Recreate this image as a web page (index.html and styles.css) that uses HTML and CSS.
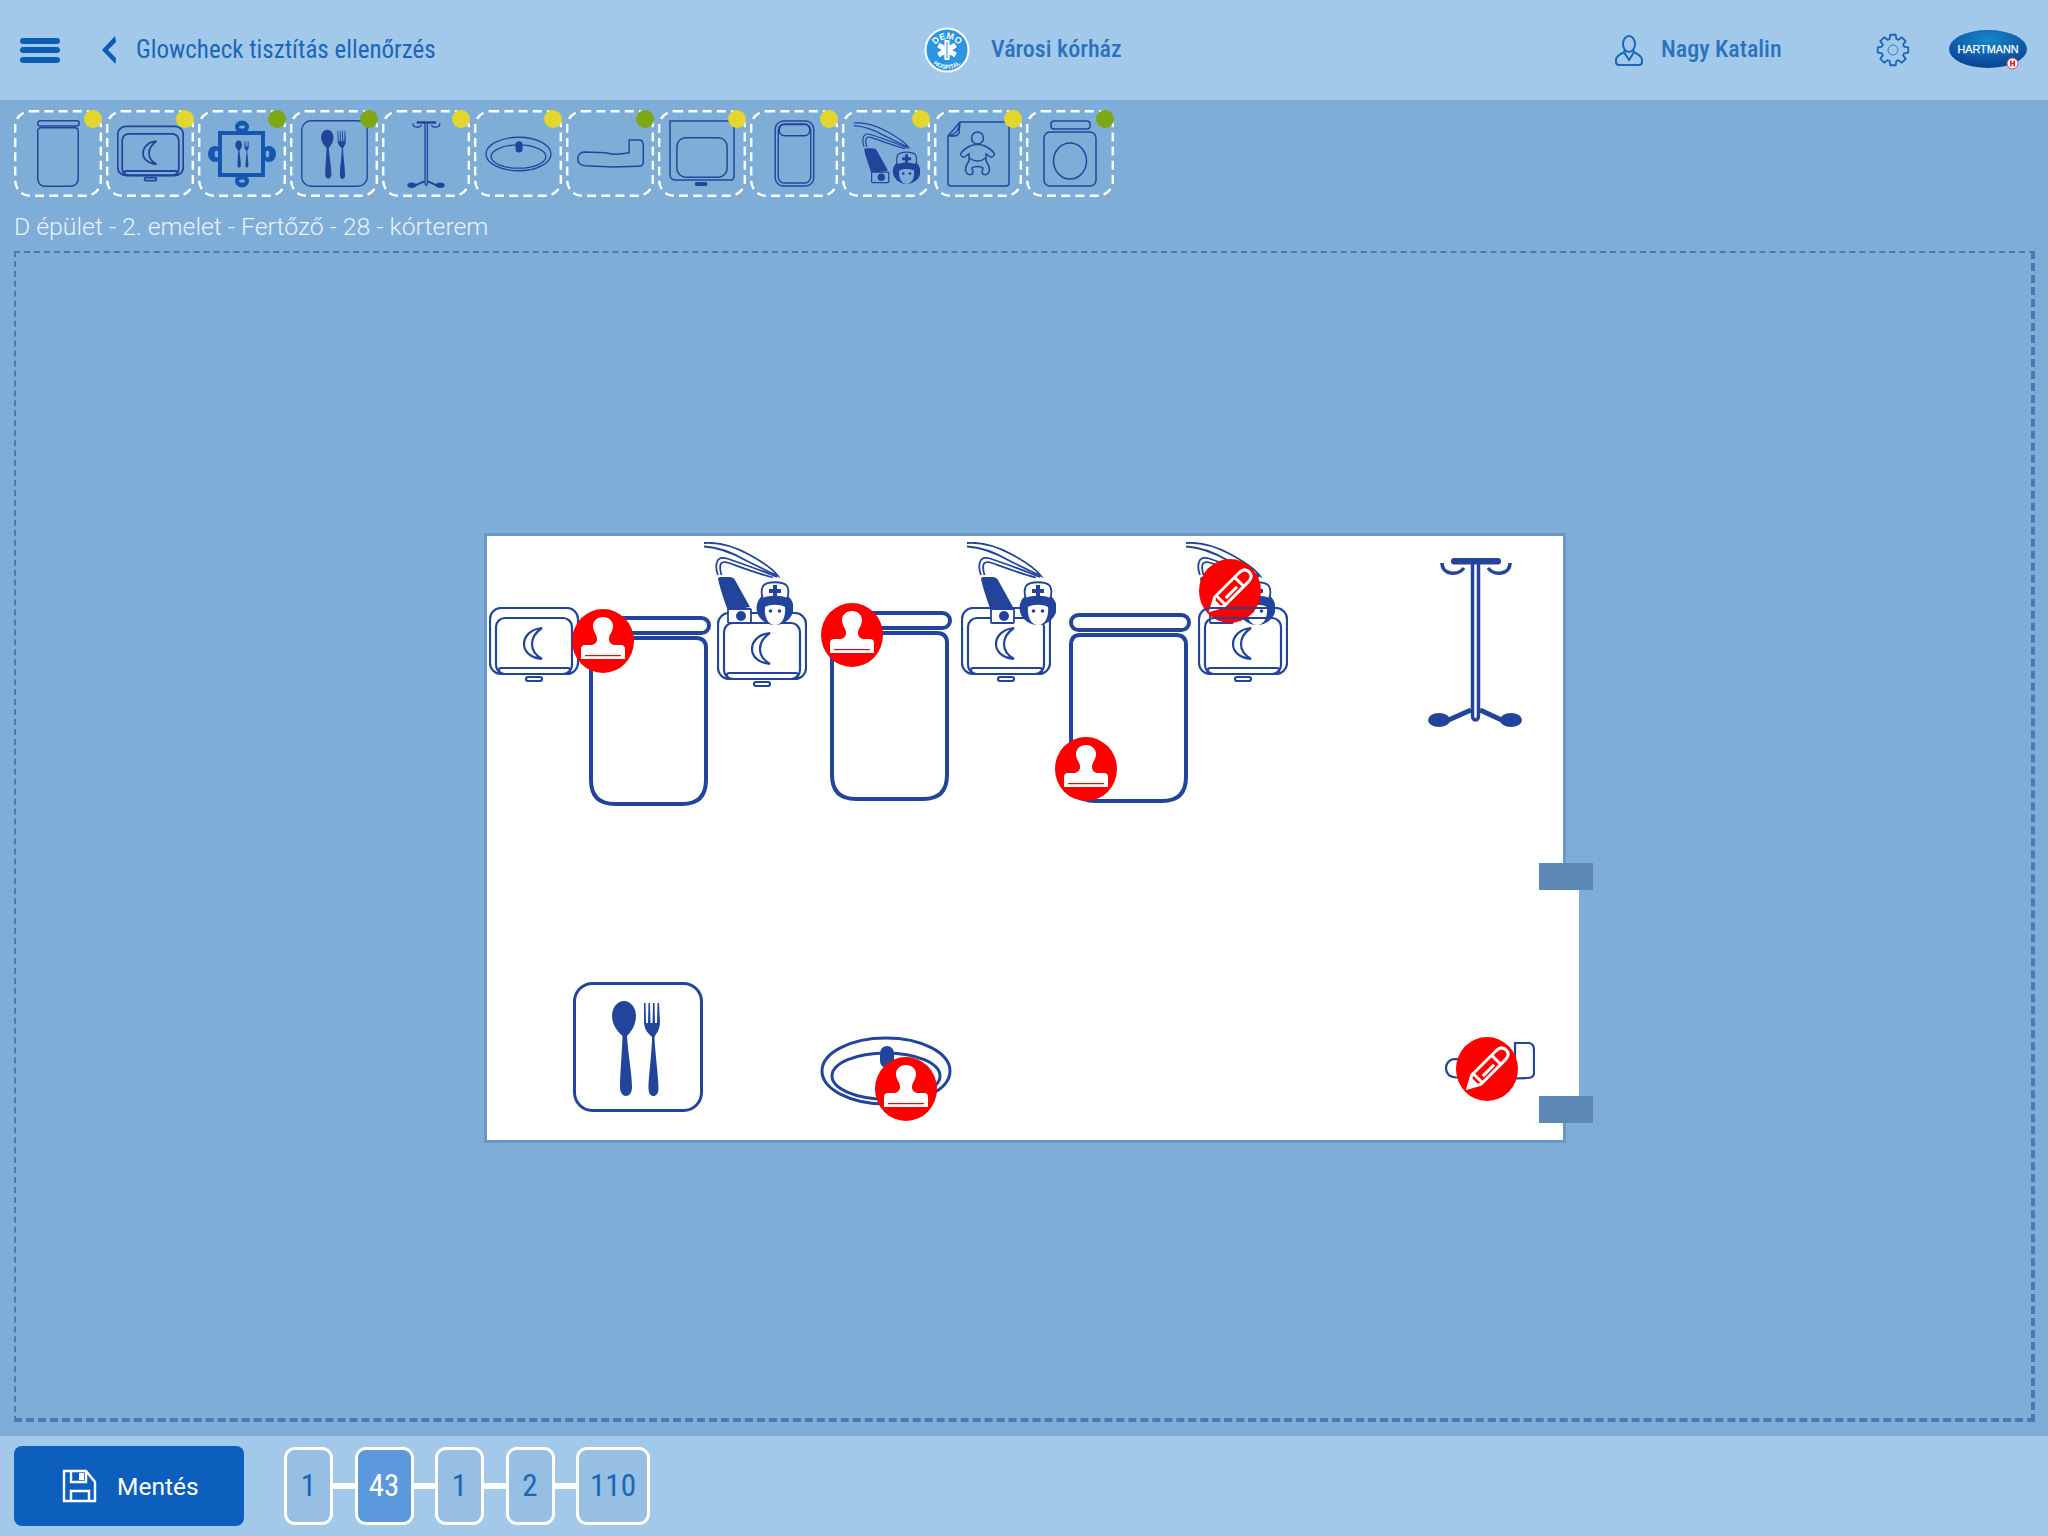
FILE: index.html
```html
<!DOCTYPE html>
<html lang="hu">
<head>
    <meta charset="UTF-8">
    <title>Glowcheck</title>
    <link rel="stylesheet" href="styles.css">
</head>
<body>
    <!-- shared drawings for the toolbar and the room plan -->
    <svg class="sprite">
        <symbol id="tile-frame" viewBox="0 0 88 87">
            <rect x="1.2" y="1.2" width="85.6" height="84.6" rx="15" stroke-dasharray="9 5.2"/>
        </symbol>
        <symbol id="bed" viewBox="0 0 122 190">
            <rect x="2" y="2" width="118" height="15" rx="7.5"/>
            <path d="M11 22 H107 Q117 22 117 32 V164 Q117 188 93 188 H26 Q2 188 2 164 V32 Q2 22 11 22 Z"/>
        </symbol>
        <symbol id="nightstand" viewBox="0 0 90 75">
            <rect x="1" y="1" width="88" height="66" rx="11"/>
            <rect x="7" y="11" width="76" height="56" rx="9"/>
            <rect x="10" y="61" width="71" height="6" rx="2"/>
            <rect x="37" y="70" width="16" height="4" rx="2"/>
            <path d="M53 21 C42 22 35 29 35 37 C35 45 42 51 53 52 C46 48 43 43 43 37 C43 30 47 25 53 21 Z"/>
        </symbol>
        <symbol id="utensils" viewBox="37 17 52 99">
            <path class="solid" d="M51 19 C44 19 39 26 39 34 C39 43 45 50 49.5 54 C49 72 47 92 47 105 C47 111 50 114 53 114 C56 114 59 111 59 105 C59 92 55 72 54 54 C58 50 63 43 63 34 C63 26 58 19 51 19 Z"/>
            <path class="solid" d="M71 21 h1.5 l.5 20 h2 l.5 -20 h1.5 l.5 20 h2 l.5 -20 h1.5 l.5 20 h2 l.5 -20 h1.5 L87 40 C87 48 83 52 81.5 55 C82 70 85.5 95 85.5 106 C85.5 112 83 114 80.5 114 C78 114 75.5 112 75.5 106 C75.5 95 79 70 79 55 C76 52 71 48 71 40 Z"/>
        </symbol>
        <symbol id="cutlery" viewBox="0 0 130 130">
            <rect x="1.5" y="1.5" width="127" height="127" rx="18"/>
            <use href="#utensils" x="37" y="17" width="52" height="99"/>
        </symbol>
        <symbol id="table" viewBox="0 0 68 68">
            <ellipse class="seat" cx="34" cy="7" rx="7" ry="6.5"/>
            <ellipse class="seat" cx="34" cy="61" rx="7" ry="6.5"/>
            <ellipse class="seat" cx="7" cy="34" rx="7" ry="8"/>
            <ellipse class="seat" cx="61" cy="34" rx="7" ry="8"/>
            <ellipse class="seat-gap" cx="34" cy="7" rx="3" ry="1.6"/>
            <ellipse class="seat-gap" cx="34" cy="61" rx="3" ry="1.6"/>
            <ellipse class="seat-gap" cx="8.5" cy="34" rx="1.8" ry="3.5"/>
            <ellipse class="seat-gap" cx="59.5" cy="34" rx="1.8" ry="3.5"/>
            <rect class="table-top" x="12" y="13" width="43" height="42"/>
            <use href="#utensils" x="24" y="20" width="20" height="28"/>
        </symbol>
        <symbol id="stand" viewBox="-3 0 96 172">
            <rect class="solid" x="21" y="3" width="50" height="6.5" rx="3"/>
            <path d="M12 8 C12 20 28 21 34 13 M58 13 C64 21 80 20 80 8"/>
            <path d="M42.5 9 V160 Q42.5 165 45.5 165 Q48.5 165 48.5 160 V9"/>
            <path class="stand-leg" d="M41 155 L14 167 M50 155 L76 167"/>
            <ellipse class="solid" cx="9" cy="165" rx="11" ry="7"/>
            <ellipse class="solid" cx="81" cy="165" rx="11" ry="7"/>
        </symbol>
        <symbol id="basin" viewBox="0 0 132 70">
            <ellipse cx="66" cy="35" rx="64" ry="33"/>
            <ellipse cx="66" cy="40" rx="54" ry="23"/>
            <rect class="solid" x="60" y="10" width="14" height="22" rx="7"/>
        </symbol>
        <symbol id="rail" viewBox="0 0 90 38">
            <path d="M10 17 C4 17 1 22 1 26 C1 32 5 35 11 35.5 L48 37 L82 36 C87 36 89 34 89 31 L89 8 C89 4 87 1 83 1 L70 1 L70 18 C60 20 48 21 38 18 Z"/>
        </symbol>
        <symbol id="tray" viewBox="0 0 68 68">
            <path d="M1 1 H66 V57 Q66 61 62 61 H7 Q1 61 1 55 Z"/>
            <rect x="8" y="18" width="51" height="40" rx="9"/>
            <rect class="solid" x="26" y="63" width="13" height="4" rx="2"/>
        </symbol>
        <symbol id="frame" viewBox="0 0 40 66">
            <rect x="1" y="1" width="38" height="64" rx="8"/>
            <rect x="4" y="4" width="32" height="58" rx="6"/>
            <rect x="5" y="4.5" width="30" height="11" rx="5"/>
        </symbol>
        <symbol id="nurse" viewBox="0 0 90 84">
            <path d="M1 1 C14 0 30 4 45 12 C58 19 70 27 75 34 C62 28 50 22 44 19 C30 11 14 5 1 4.5"/>
            <path d="M15 33 C13 28 13 23 14 20 C15 16 19 15 24 16.5 C40 22 62 30 74 35"/>
            <path d="M18.5 33 C17 28 16.5 24 18 21.5 C20 19 23 20 26 21 C40 26 56 32 70 35.5"/>
            <path class="solid" d="M15 37 C15 35 17 35 19 35 L26 35 C29 35 31 36 32 38 L47 65 L25 69 C21 58 17 46 15 37 Z"/>
            <rect class="paper" x="25" y="67" width="23" height="14" rx="1"/>
            <circle class="solid" cx="38" cy="74" r="5"/>
            <ellipse class="solid" cx="72" cy="66" rx="18.5" ry="17"/>
            <path class="paper" d="M60 44 C64 39 80 39 84 44 C86 48 85.5 53 84 57 C78 54 66 54 60 57 C58.5 53 58 48 60 44 Z"/>
            <path class="paper-flat" d="M62 65 C67 62 77 62 82 65 C83 75 79 83 72 83 C65 83 61 75 62 65 Z"/>
            <path class="solid" d="M70 43 H74 V47 H78 V51 H74 V55 H70 V51 H66 V47 H70 Z"/>
            <circle class="solid" cx="67.5" cy="69" r="1.8"/>
            <circle class="solid" cx="76.5" cy="69" r="1.8"/>
        </symbol>
        <symbol id="baby" viewBox="0 0 64 68">
            <path d="M14 2 L60 2 Q63 2 63 5 L63 63 Q63 66 60 66 L5 66 Q2 66 2 63 L2 16 Z"/>
            <path d="M14 2 C13 9 11 14 2 16 C7 16 12 17 13 13 Z"/>
            <circle cx="31.5" cy="18" r="6"/>
            <path d="M24 26 C20 28 16 31 14.5 34 C15 37 18 38 20 36 L23 34 L23 41 C20 45 19 49 20 52 C22 56 27 55 27 52 L26 48 C28 46 35 46 37 48 L36 52 C36 55 41 56 43 52 C44 49 43 45 40 41 L40 34 L43 36 C45 38 48 37 48.5 34 C47 31 43 28 39 26 Q31.5 23 24 26 Z"/>
            <path d="M23 38 Q31.5 44 40 38"/>
        </symbol>
        <symbol id="seat" viewBox="0 0 54 67">
            <rect x="8" y="1" width="39" height="8" rx="3"/>
            <rect x="1" y="12" width="52" height="54" rx="6"/>
            <ellipse cx="27" cy="41" rx="16.5" ry="18"/>
        </symbol>
        <symbol id="stamp-badge" viewBox="-31 -32 62 64">
            <ellipse class="badge-red" cx="0" cy="0" rx="31" ry="32"/>
            <path class="badge-white" d="M0 -24 C6 -24 10 -20 10 -15 C10 -9 6 -7 6 -2 C6 2 9 4 13 4 L18 4 C21 4 22 6 22 8 L22 18 L-22 18 L-22 8 C-22 6 -21 4 -18 4 L-13 4 C-9 4 -6 2 -6 -2 C-6 -7 -10 -9 -10 -15 C-10 -20 -6 -24 0 -24 Z"/>
            <rect class="badge-red" x="-18" y="14" width="36" height="1.2"/>
        </symbol>
        <symbol id="pen-badge" viewBox="-31 -32 62 64">
            <ellipse class="badge-red" cx="0" cy="0" rx="31" ry="32"/>
            <g transform="rotate(-45)">
                <path class="pen-line" d="M-27 0 L-15 -6.5 H19 Q27 -6.5 27 0 Q27 6.5 19 6.5 H-15 Z"/>
                <path class="badge-white" d="M-28 0 L-17 -6 V6 Z"/>
                <path class="pen-line" d="M-13 -6 V6 M13 -6 V6 M-8 2 H8"/>
            </g>
        </symbol>
    </svg>

    <header class="top-bar">
        <div class="hamburger"><span></span><span></span><span></span></div>
        <svg class="chevron" viewBox="0 0 14 28"><path d="M13 0 L14 6 L6 14 L14 22 L13.5 28 L0 14 Z"/></svg>
        <span class="page-title">Glowcheck tisztítás ellenőrzés</span>

        <svg class="hospital-logo" viewBox="-23 -23 46 46">
            <defs>
                <path id="arc-top" d="M-14 3 A14 14 0 0 1 14 3"/>
                <path id="arc-bottom" d="M-20 -1 A20 20 0 0 0 20 -1"/>
            </defs>
            <circle class="logo-ring" r="21.5"/>
            <g class="logo-star">
                <rect x="-2.6" y="-10" width="5.2" height="20" rx="1"/>
                <rect x="-2.6" y="-10" width="5.2" height="20" rx="1" transform="rotate(60)"/>
                <rect x="-2.6" y="-10" width="5.2" height="20" rx="1" transform="rotate(120)"/>
            </g>
            <path class="logo-staff" d="M0 -8 V8"/>
            <text class="logo-text"><textPath href="#arc-top" startOffset="50%">DEMO</textPath></text>
            <text class="logo-small"><textPath href="#arc-bottom" startOffset="50%">HOSPITAL</textPath></text>
        </svg>
        <span class="hospital-name">Városi kórház</span>

        <svg class="user-icon" viewBox="0 0 28 31">
            <ellipse cx="14" cy="9" rx="6" ry="8"/>
            <path d="M9.5 15 V17 C5 19 1 21 1 25 V27 Q1 30 4 30 H24 Q27 30 27 27 V25 C27 21 23 19 18.5 17 V15 M9.5 18 L14 25 L18.5 18"/>
        </svg>
        <span class="user-name">Nagy Katalin</span>

        <svg class="gear-icon" viewBox="-17 -17 34 34">
            <polygon points="-3.36,-11 -2.7,-15.26 2.7,-15.26 3.36,-11 5.4,-10.15 8.88,-12.7 12.7,-8.88 10.15,-5.4 11,-3.36 15.26,-2.7 15.26,2.7 11,3.36 10.15,5.4 12.7,8.88 8.88,12.7 5.4,10.15 3.36,11 2.7,15.26 -2.7,15.26 -3.36,11 -5.4,10.15 -8.88,12.7 -12.7,8.88 -10.15,5.4 -11,3.36 -15.26,2.7 -15.26,-2.7 -11,-3.36 -10.15,-5.4 -12.7,-8.88 -8.88,-12.7 -5.4,-10.15"/>
            <circle class="gear-hub" r="5"/>
        </svg>

        <svg class="brand-logo" viewBox="0 0 78 40">
            <defs>
                <radialGradient id="brand-fill" cx="50%" cy="25%" r="70%">
                    <stop offset="0" stop-color="#1488cc"/>
                    <stop offset="1" stop-color="#0a4596"/>
                </radialGradient>
            </defs>
            <ellipse cx="39" cy="19" rx="39" ry="19" fill="url(#brand-fill)"/>
            <text class="brand-text" x="39" y="23" textLength="61" lengthAdjust="spacingAndGlyphs">HARTMANN</text>
            <circle class="brand-seal" cx="63.5" cy="33.5" r="5.5"/>
            <path class="brand-cross" d="M61 30.5 H62.6 V32.7 H64.4 V30.5 H66 V36.5 H64.4 V34.3 H62.6 V36.5 H61 Z"/>
        </svg>
    </header>

    <main class="work-area">
        <div class="tool-row">
            <div class="tile"><svg class="tile-frame"><use href="#tile-frame"/></svg><svg class="icon icon-bed"><use href="#bed"/></svg><i class="dot dot-yellow"></i></div>
            <div class="tile"><svg class="tile-frame"><use href="#tile-frame"/></svg><svg class="icon icon-nightstand"><use href="#nightstand"/></svg><i class="dot dot-yellow"></i></div>
            <div class="tile"><svg class="tile-frame"><use href="#tile-frame"/></svg><svg class="icon icon-table"><use href="#table"/></svg><i class="dot dot-green"></i></div>
            <div class="tile"><svg class="tile-frame"><use href="#tile-frame"/></svg><svg class="icon icon-cutlery"><use href="#cutlery"/></svg><i class="dot dot-green"></i></div>
            <div class="tile"><svg class="tile-frame"><use href="#tile-frame"/></svg><svg class="icon icon-stand"><use href="#stand"/></svg><i class="dot dot-yellow"></i></div>
            <div class="tile"><svg class="tile-frame"><use href="#tile-frame"/></svg><svg class="icon icon-basin"><use href="#basin"/></svg><i class="dot dot-yellow"></i></div>
            <div class="tile"><svg class="tile-frame"><use href="#tile-frame"/></svg><svg class="icon icon-rail"><use href="#rail"/></svg><i class="dot dot-green"></i></div>
            <div class="tile"><svg class="tile-frame"><use href="#tile-frame"/></svg><svg class="icon icon-tray"><use href="#tray"/></svg><i class="dot dot-yellow"></i></div>
            <div class="tile"><svg class="tile-frame"><use href="#tile-frame"/></svg><svg class="icon icon-frame"><use href="#frame"/></svg><i class="dot dot-yellow"></i></div>
            <div class="tile"><svg class="tile-frame"><use href="#tile-frame"/></svg><svg class="icon icon-nurse"><use href="#nurse"/></svg><i class="dot dot-yellow"></i></div>
            <div class="tile"><svg class="tile-frame"><use href="#tile-frame"/></svg><svg class="icon icon-baby"><use href="#baby"/></svg><i class="dot dot-yellow"></i></div>
            <div class="tile"><svg class="tile-frame"><use href="#tile-frame"/></svg><svg class="icon icon-seat"><use href="#seat"/></svg><i class="dot dot-green"></i></div>
        </div>

        <div class="location">D épület - 2. emelet - Fertőző - 28 - kórterem</div>

        <div class="canvas">
            <div class="room">
                <!-- viewBox is in page pixels so the plan reads like the measured layout -->
                <svg class="room-plan" viewBox="487 536 1076 604">
                    <rect class="door-gap" x="1560" y="890" width="19" height="206"/>
                    <rect class="door-post" x="1539" y="863" width="54" height="27"/>
                    <rect class="door-post" x="1539" y="1096" width="54" height="27"/>

                    <use class="line-bed" href="#bed" x="589" y="616" width="122" height="190"/>
                    <use class="line-bed" href="#bed" x="830" y="611" width="122" height="190"/>
                    <use class="line-bed" href="#bed" x="1069" y="613" width="122" height="190"/>

                    <use class="line-thin" href="#nightstand" x="489" y="607" width="90" height="75"/>
                    <use class="line-thin" href="#nightstand" x="717" y="612" width="90" height="75"/>
                    <use class="line-thin" href="#nightstand" x="961" y="607" width="90" height="75"/>

                    <use class="line-nurse" href="#nurse" x="703" y="542" width="90" height="84"/>
                    <use class="line-nurse" href="#nurse" x="966" y="542" width="90" height="84"/>
                    <use class="line-nurse" href="#nurse" x="1185" y="542" width="90" height="84"/>

                    <use href="#pen-badge" x="1199" y="559" width="62" height="64"/>
                    <use class="line-thin" href="#nightstand" x="1198" y="607" width="90" height="75"/>

                    <use class="line-stand" href="#stand" x="1427" y="555" width="96" height="172"/>
                    <use class="line-tile" href="#cutlery" x="573" y="982" width="130" height="130"/>
                    <use class="line-tile" href="#basin" x="820" y="1036" width="132" height="70"/>
                    <use class="line-thin" href="#rail" x="1445" y="1042" width="90" height="38"/>

                    <use href="#stamp-badge" x="572" y="609" width="62" height="64"/>
                    <use href="#stamp-badge" x="821" y="603" width="62" height="64"/>
                    <use href="#stamp-badge" x="1055" y="737" width="62" height="64"/>
                    <use href="#stamp-badge" x="875" y="1057" width="62" height="64"/>
                    <use href="#pen-badge" x="1456" y="1037" width="62" height="64"/>
                </svg>
            </div>
        </div>
    </main>

    <footer class="bottom-bar">
        <button class="save-btn">
            <svg class="save-icon" viewBox="0 0 35 34">
                <path d="M2 2 H24 L33 13 V32 H2 Z M9 2 V13 H24 V2 M9 32 V22 H27 V32"/>
                <rect class="save-slot" x="17" y="4" width="5" height="7"/>
            </svg>
            Mentés
        </button>
        <div class="steps">
            <span class="step">1</span><i class="link"></i>
            <span class="step step-mid step-on">43</span><i class="link"></i>
            <span class="step">1</span><i class="link"></i>
            <span class="step">2</span><i class="link"></i>
            <span class="step step-wide">110</span>
        </div>
    </footer>
</body>
</html>
```

FILE: styles.css
```css
body {
    margin: 0;
    width: 2048px;
    height: 1536px;
    display: flex;
    flex-direction: column;
    overflow: hidden;
    background-color: #7eadd8;
    font-family: Roboto, "Liberation Sans", sans-serif;
    font-stretch: condensed;
}

.sprite {
    display: none;
}

/* Shapes inside the shared drawings */
.icon,
.room-plan {
    fill: none;
    stroke: #22459b;
    --paper: #7eadd8;
}

.room-plan {
    --paper: #fff;
}

.solid {
    fill: #22459b;
    stroke: none;
}

.paper {
    fill: var(--paper);
}

.paper-flat {
    fill: var(--paper);
    stroke: none;
}

/* Top bar */
.top-bar {
    height: 100px;
    flex: none;
    display: flex;
    align-items: center;
    background-color: #a2c9ea;
}

.hamburger {
    width: 40px;
    margin-left: 20px;
    display: flex;
    flex-direction: column;
    gap: 3.5px;
}

.hamburger span {
    height: 6px;
    border-radius: 3px;
    background-color: #0a5cb5;
}

.chevron {
    width: 14px;
    height: 28px;
    margin-left: 42px;
    fill: #0a5cb5;
}

.page-title {
    width: 298px;
    margin-left: 20px;
    margin-bottom: 1px;
    font-size: 25px;
    color: #1a66ba;
    white-space: nowrap;
}

.hospital-logo {
    width: 46px;
    height: 46px;
    margin-left: 490px;
}

.logo-ring {
    fill: #2b95e2;
    stroke: #fff;
    stroke-width: 2;
}

.logo-star {
    fill: #fff;
}

.logo-staff {
    fill: none;
    stroke: #2b95e2;
    stroke-width: 1;
}

.logo-text,
.logo-small {
    fill: #fff;
    font-family: "Liberation Sans", sans-serif;
    font-weight: bold;
    font-stretch: normal;
    text-anchor: middle;
}

.logo-text {
    font-size: 9px;
}

.logo-small {
    font-size: 6px;
}

.hospital-name {
    width: 129px;
    margin-left: 21px;
    margin-bottom: 2px;
    font-size: 24px;
    font-weight: 500;
    color: #2a72c0;
    white-space: nowrap;
}

.user-icon {
    width: 28px;
    height: 31px;
    margin-left: 495px;
    fill: none;
    stroke: #1a66ba;
    stroke-width: 2;
}

.user-name {
    width: 119px;
    margin-left: 18px;
    margin-bottom: 2px;
    font-size: 24px;
    font-weight: 500;
    color: #2a72c0;
    white-space: nowrap;
}

.gear-icon {
    width: 34px;
    height: 34px;
    margin-left: 96px;
    fill: none;
    stroke: #1a66ba;
    stroke-width: 1.8;
    stroke-linejoin: round;
}

.gear-hub {
    stroke-width: 0.8;
}

.brand-logo {
    width: 78px;
    height: 40px;
    margin-left: 39px;
}

.brand-text {
    fill: #fff;
    stroke: #fff;
    stroke-width: 0.25;
    font-family: "Liberation Sans", sans-serif;
    font-size: 11.5px;
    font-stretch: normal;
    text-anchor: middle;
}

.brand-seal {
    fill: #fff;
    stroke: #c9464a;
    stroke-width: 1;
}

.brand-cross {
    fill: #d8232a;
}

/* Tool row */
.work-area {
    flex: 1;
    display: flex;
    flex-direction: column;
    min-height: 0;
    padding: 10px 13px 14px 14px;
}

.tool-row {
    display: flex;
    gap: 4px;
}

.tile {
    position: relative;
    width: 88px;
    height: 87px;
    display: flex;
    align-items: center;
    justify-content: center;
}

.tile-frame {
    position: absolute;
    top: 0;
    left: 0;
    width: 88px;
    height: 87px;
    fill: none;
    stroke: #fff;
    stroke-width: 2.4;
}

.dot {
    position: absolute;
    top: 0;
    right: 0;
    width: 18px;
    height: 18px;
    border-radius: 50%;
}

.dot-yellow {
    background-color: #e2d62f;
}

.dot-green {
    background-color: #7ea713;
}

.icon-bed {
    width: 43px;
    height: 67px;
    stroke-width: 4.2;
}

.icon-nightstand {
    width: 67px;
    height: 57px;
    stroke-width: 2.4;
}

.icon-table {
    width: 68px;
    height: 68px;
    stroke-width: 1.5;
}

.table-top {
    stroke: #1456b0;
    stroke-width: 4;
}

.seat {
    fill: #1456b0;
    stroke: none;
}

.seat-gap {
    fill: #7eadd8;
    stroke: none;
}

.icon-cutlery {
    width: 67px;
    height: 67px;
    stroke-width: 2.6;
}

.icon-stand {
    width: 38px;
    height: 68px;
    stroke-width: 3.4;
}

.stand-leg {
    stroke-width: 5;
}

.icon-basin {
    width: 67px;
    height: 36px;
    stroke-width: 2.6;
}

.icon-rail {
    width: 67px;
    height: 29px;
    stroke-width: 2;
}

.icon-tray {
    width: 67px;
    height: 67px;
    stroke-width: 1.5;
}

.icon-frame {
    width: 41px;
    height: 67px;
    stroke-width: 1.4;
}

.icon-nurse {
    width: 67px;
    height: 63px;
    stroke-width: 1.6;
}

.icon-baby {
    width: 64px;
    height: 68px;
    stroke-width: 1.5;
}

.icon-seat {
    width: 54px;
    height: 67px;
    stroke-width: 1.5;
}

.location {
    margin-top: 14px;
    font-size: 24.8px;
    font-stretch: normal;
    font-weight: 300;
    line-height: 31px;
    color: #e9f2fa;
    white-space: nowrap;
}

/* Room canvas */
.canvas {
    flex: 1;
    min-height: 0;
    margin-top: 9px;
    padding: 4px 0 0 3px;
    display: flex;
    align-items: center;
    justify-content: center;
    border-style: dashed;
    border-color: #4a7ab5;
    border-width: 2px 4px 4px 2px;
}

.room {
    width: 1076px;
    height: 604px;
    border: 3px solid #6c96c6;
    background-color: #fff;
}

.room-plan {
    display: block;
    width: 1076px;
    height: 604px;
    overflow: visible;
}

.door-gap {
    fill: #fff;
    stroke: none;
}

.door-post {
    fill: #5e88b6;
    stroke: none;
}

.line-bed {
    stroke-width: 4;
}

.line-thin {
    stroke-width: 2.2;
}

.line-tile {
    stroke-width: 3;
}

.line-stand {
    stroke-width: 3.5;
}

.line-nurse {
    stroke-width: 1.8;
}

.badge-red {
    fill: #fe0000;
    stroke: none;
}

.badge-white {
    fill: #fff;
    stroke: none;
}

.pen-line {
    fill: none;
    stroke: #fff;
    stroke-width: 3;
}

/* Bottom bar */
.bottom-bar {
    height: 100px;
    flex: none;
    display: flex;
    align-items: center;
    padding-left: 14px;
    background-color: #a2c9ea;
}

.save-btn {
    width: 230px;
    height: 80px;
    display: flex;
    align-items: center;
    gap: 20px;
    padding: 0 0 0 48px;
    border: none;
    border-radius: 8px;
    background-color: #0d5fbe;
    color: #fff;
    font-family: inherit;
    font-size: 24.5px;
}

.save-icon {
    width: 35px;
    height: 34px;
    fill: none;
    stroke: #fff;
    stroke-width: 2.4;
}

.save-slot {
    fill: #fff;
    stroke: none;
}

.steps {
    display: flex;
    align-items: center;
    margin-left: 40px;
}

.step {
    width: 49px;
    height: 78px;
    box-sizing: border-box;
    padding-bottom: 2px;
    display: flex;
    align-items: center;
    justify-content: center;
    border: 3px solid #fff;
    border-radius: 11px;
    background-color: #96bfe3;
    color: #1a66ba;
    font-size: 31px;
}

.step-mid {
    width: 59px;
}

.step-wide {
    width: 74px;
}

.step-on {
    background-color: #5c98dc;
    color: #fff;
}

.link {
    width: 21.5px;
    height: 6px;
    background-color: #fff;
}
```
